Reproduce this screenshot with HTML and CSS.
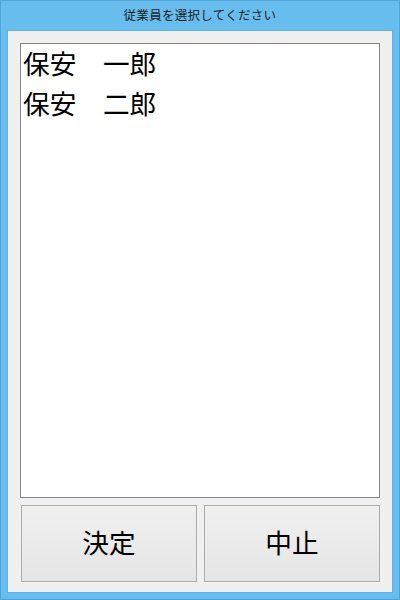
FILE: index.html
```html
<!DOCTYPE html>
<html lang="ja">
<head>
<meta charset="utf-8">
<link rel="stylesheet" href="styles.css">
</head>
<body>
<div class="window">
  <div class="titlebar">従業員を選択してください</div>
  <div class="client">
    <ul class="list">
      <li>保安　一郎</li>
      <li>保安　二郎</li>
    </ul>
    <div class="buttons">
      <button class="btn">決定</button>
      <button class="btn">中止</button>
    </div>
  </div>
</div>
</body>
</html>
```
FILE: styles.css
```css
html, body {
  margin: 0;
  padding: 0;
}
body {
  width: 400px;
  height: 600px;
  font-family: "Noto Sans CJK JP", "Noto Sans", sans-serif;
}
.window {
  box-sizing: border-box;
  width: 400px;
  height: 600px;
  background: #66bdee;
  border: 1px solid #4fa4da;
  display: flex;
  flex-direction: column;
}
.titlebar {
  height: 29px;
  line-height: 28px;
  text-align: center;
  font-size: 12.5px;
  letter-spacing: 0.3px;
  color: #1e1e1e;
  flex: none;
}
.client {
  flex: 1;
  margin: 0 6px 6px 6px;
  background: #f0f0f0;
  box-sizing: border-box;
  border: 1px solid #5eb2e6;
  padding: 12px 12px 10px 12px;
  display: flex;
  flex-direction: column;
}
.list {
  margin: 0;
  padding: 0 0 0 2px;
  list-style: none;
  background: #fff;
  border: 1px solid #828790;
  height: 455px;
  box-sizing: border-box;
  flex: none;
}
.list li {
  font-size: 26.67px;
  line-height: 40px;
  height: 40px;
  color: #000;
  padding-top: 0;
  margin-top: -1px;
}
.list li + li {
  margin-top: 0;
}
.buttons {
  display: grid;
  grid-template-columns: 176px 176px;
  column-gap: 7px;
  margin: 7px 0 0 1px;
  height: 77px;
}
.btn {
  font-family: "Noto Sans CJK JP", "Noto Sans", sans-serif;
  font-size: 26.67px;
  color: #000;
  border: 1px solid #acacac;
  background: linear-gradient(#f0f0f0, #e5e5e5);
  padding: 0 0 5px 0;
  margin: 0;
  height: 77px;
  border-radius: 0;
}
```
